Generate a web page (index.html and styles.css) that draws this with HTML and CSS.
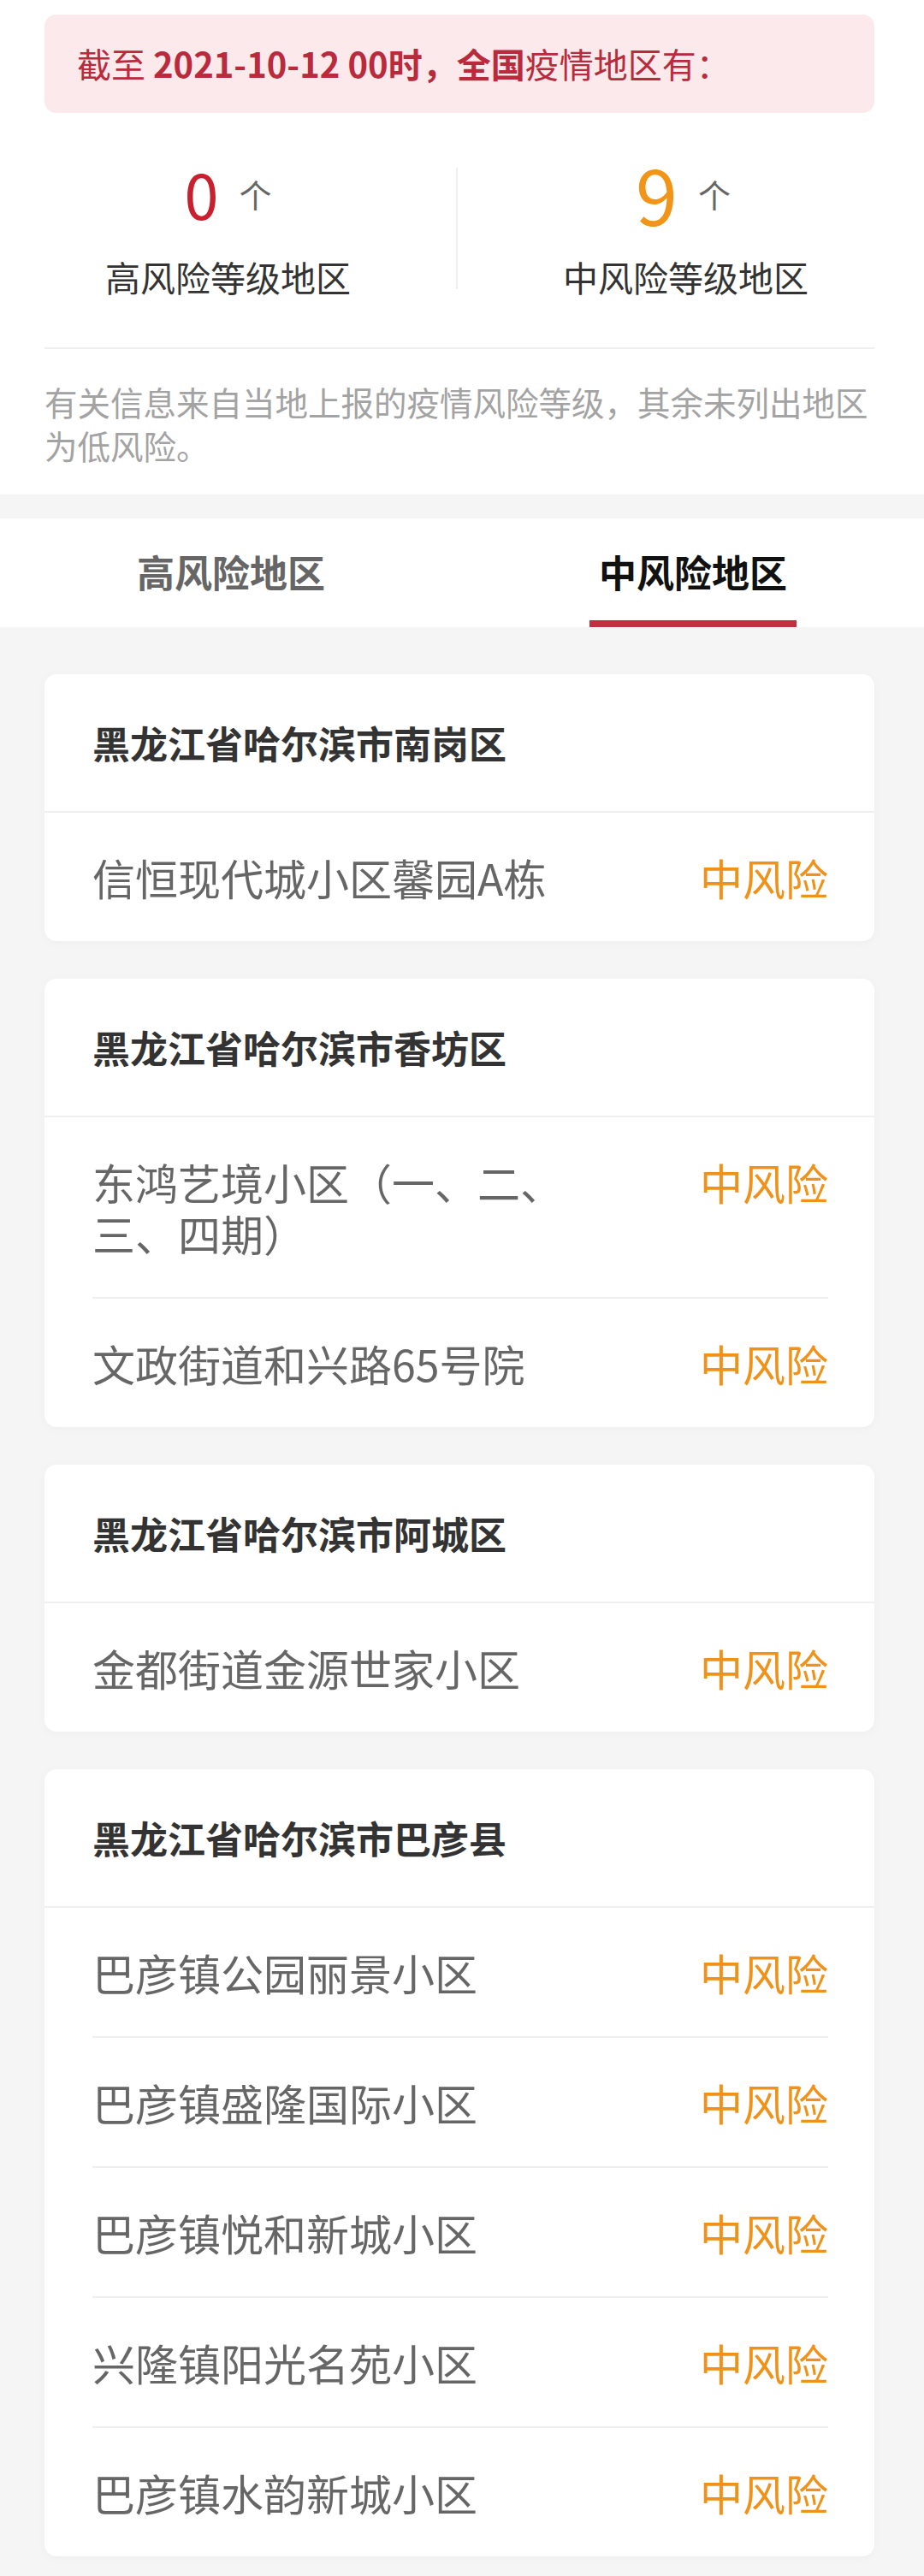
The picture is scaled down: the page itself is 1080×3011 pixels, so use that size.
FILE: index.html
```html
<!DOCTYPE html>
<html lang="zh-CN">
<head>
    <meta charset="UTF-8">
    <meta name="viewport" content="width=device-width, initial-scale=1.0">
    <title>风险等级地区</title>
    <link rel="stylesheet" href="styles.css">
</head>
<body>
    <div class="summary">
        <div class="notice">截至 <b>2021-10-12 00时，全国</b>疫情地区有：</div>

        <div class="stats">
            <div class="stat">
                <div class="stat-num"><span class="num high">0</span><span class="unit">个</span></div>
                <div class="stat-label">高风险等级地区</div>
            </div>
            <div class="stat-divider"></div>
            <div class="stat">
                <div class="stat-num"><span class="num mid">9</span><span class="unit">个</span></div>
                <div class="stat-label">中风险等级地区</div>
            </div>
        </div>

        <div class="rule"></div>
        <p class="note">有关信息来自当地上报的疫情风险等级，其余未列出地区为低风险。</p>
    </div>

    <div class="tabs">
        <div class="tab">
            <span class="tab-text">高风险地区</span>
            <span class="tab-bar"></span>
        </div>
        <div class="tab active">
            <span class="tab-text">中风险地区</span>
            <span class="tab-bar"></span>
        </div>
    </div>

    <div class="list">
        <div class="card">
            <div class="card-head">黑龙江省哈尔滨市南岗区</div>
            <div class="row">
                <span class="name">信恒现代城小区馨园A栋</span>
                <span class="risk">中风险</span>
            </div>
        </div>

        <div class="card">
            <div class="card-head">黑龙江省哈尔滨市香坊区</div>
            <div class="row">
                <span class="name">东鸿艺境小区（一、二、三、四期）</span>
                <span class="risk">中风险</span>
            </div>
            <div class="row">
                <span class="name">文政街道和兴路65号院</span>
                <span class="risk">中风险</span>
            </div>
        </div>

        <div class="card">
            <div class="card-head">黑龙江省哈尔滨市阿城区</div>
            <div class="row">
                <span class="name">金都街道金源世家小区</span>
                <span class="risk">中风险</span>
            </div>
        </div>

        <div class="card">
            <div class="card-head">黑龙江省哈尔滨市巴彦县</div>
            <div class="row">
                <span class="name">巴彦镇公园丽景小区</span>
                <span class="risk">中风险</span>
            </div>
            <div class="row">
                <span class="name">巴彦镇盛隆国际小区</span>
                <span class="risk">中风险</span>
            </div>
            <div class="row">
                <span class="name">巴彦镇悦和新城小区</span>
                <span class="risk">中风险</span>
            </div>
            <div class="row">
                <span class="name">兴隆镇阳光名苑小区</span>
                <span class="risk">中风险</span>
            </div>
            <div class="row">
                <span class="name">巴彦镇水韵新城小区</span>
                <span class="risk">中风险</span>
            </div>
        </div>
    </div>
</body>
</html>
```

FILE: styles.css
```css
body {
    margin: 0;
    background-color: #f5f5f5;
    font-family: "Noto Sans CJK SC", "Noto Sans", sans-serif;
    color: #333;
}

/* 顶部概况 */
.summary {
    background: #fff;
    padding: 17px 58px 32px 52px;
}
.notice {
    background-color: #fbe9eb;
    color: #b82a3c;
    border-radius: 14px;
    padding: 30px 38px;
    font-size: 40px;
    line-height: 55px;
}
.notice b {
    font-weight: 700;
}
.stats {
    display: flex;
    margin: 54px -46px 0 -52px;
}
.stat {
    flex: 1;
    display: flex;
    flex-direction: column;
    align-items: center;
}
.stat-num {
    height: 80px;
    display: flex;
    align-items: center;
}
.num {
    font-size: 72px;
    line-height: 80px;
}
.num.high {
    color: #c8202f;
}
.num.mid {
    color: #f29418;
    font-size: 88px;
    margin-left: -6px;
}
.unit {
    font-size: 38px;
    color: #666;
    margin-left: 24px;
}
.stat-label {
    margin-top: 29px;
    font-size: 41px;
    line-height: 56px;
    color: #333;
}
.stat-divider {
    width: 2px;
    background-color: #eeeeee;
    margin: 10px 0 13px;
}
.rule {
    height: 2px;
    background-color: #efefef;
    margin-top: 55px;
}
.note {
    margin: 36px 0 0;
    font-size: 38.5px;
    line-height: 51px;
    color: #a3a3a3;
}

/* 标签页 */
.tabs {
    display: flex;
    background: #fff;
    margin-top: 28px;
}
.tab {
    flex: 1;
    display: flex;
    flex-direction: column;
    align-items: center;
    padding-top: 32px;
}
.tab-text {
    font-size: 44px;
    line-height: 60px;
    font-weight: 700;
    color: #666;
}
.tab-bar {
    width: 242px;
    height: 8px;
    margin-top: 27px;
}
.tab.active .tab-text {
    color: #111;
}
.tab.active .tab-bar {
    background-color: #c0303f;
}

/* 地区列表 */
.list {
    padding: 55px 58px 25px 52px;
}
.card {
    background: #fff;
    border-radius: 14px;
    box-shadow: 0 2px 12px rgba(0,0,0,0.03);
    margin-bottom: 44px;
}
.card-head {
    padding: 50px 56px;
    font-size: 44px;
    line-height: 60px;
    font-weight: 700;
    color: #333;
    border-bottom: 2px solid #f0f0f0;
}
.row {
    display: flex;
    justify-content: space-between;
    align-items: flex-start;
    margin: 0 54px 0 56px;
    padding: 45px 0;
    font-size: 50px;
    line-height: 60px;
}
.row + .row {
    border-top: 2px solid #efefef;
}
.name {
    max-width: 580px;
    color: #666;
}
.risk {
    flex-shrink: 0;
    color: #f0921a;
}
```
